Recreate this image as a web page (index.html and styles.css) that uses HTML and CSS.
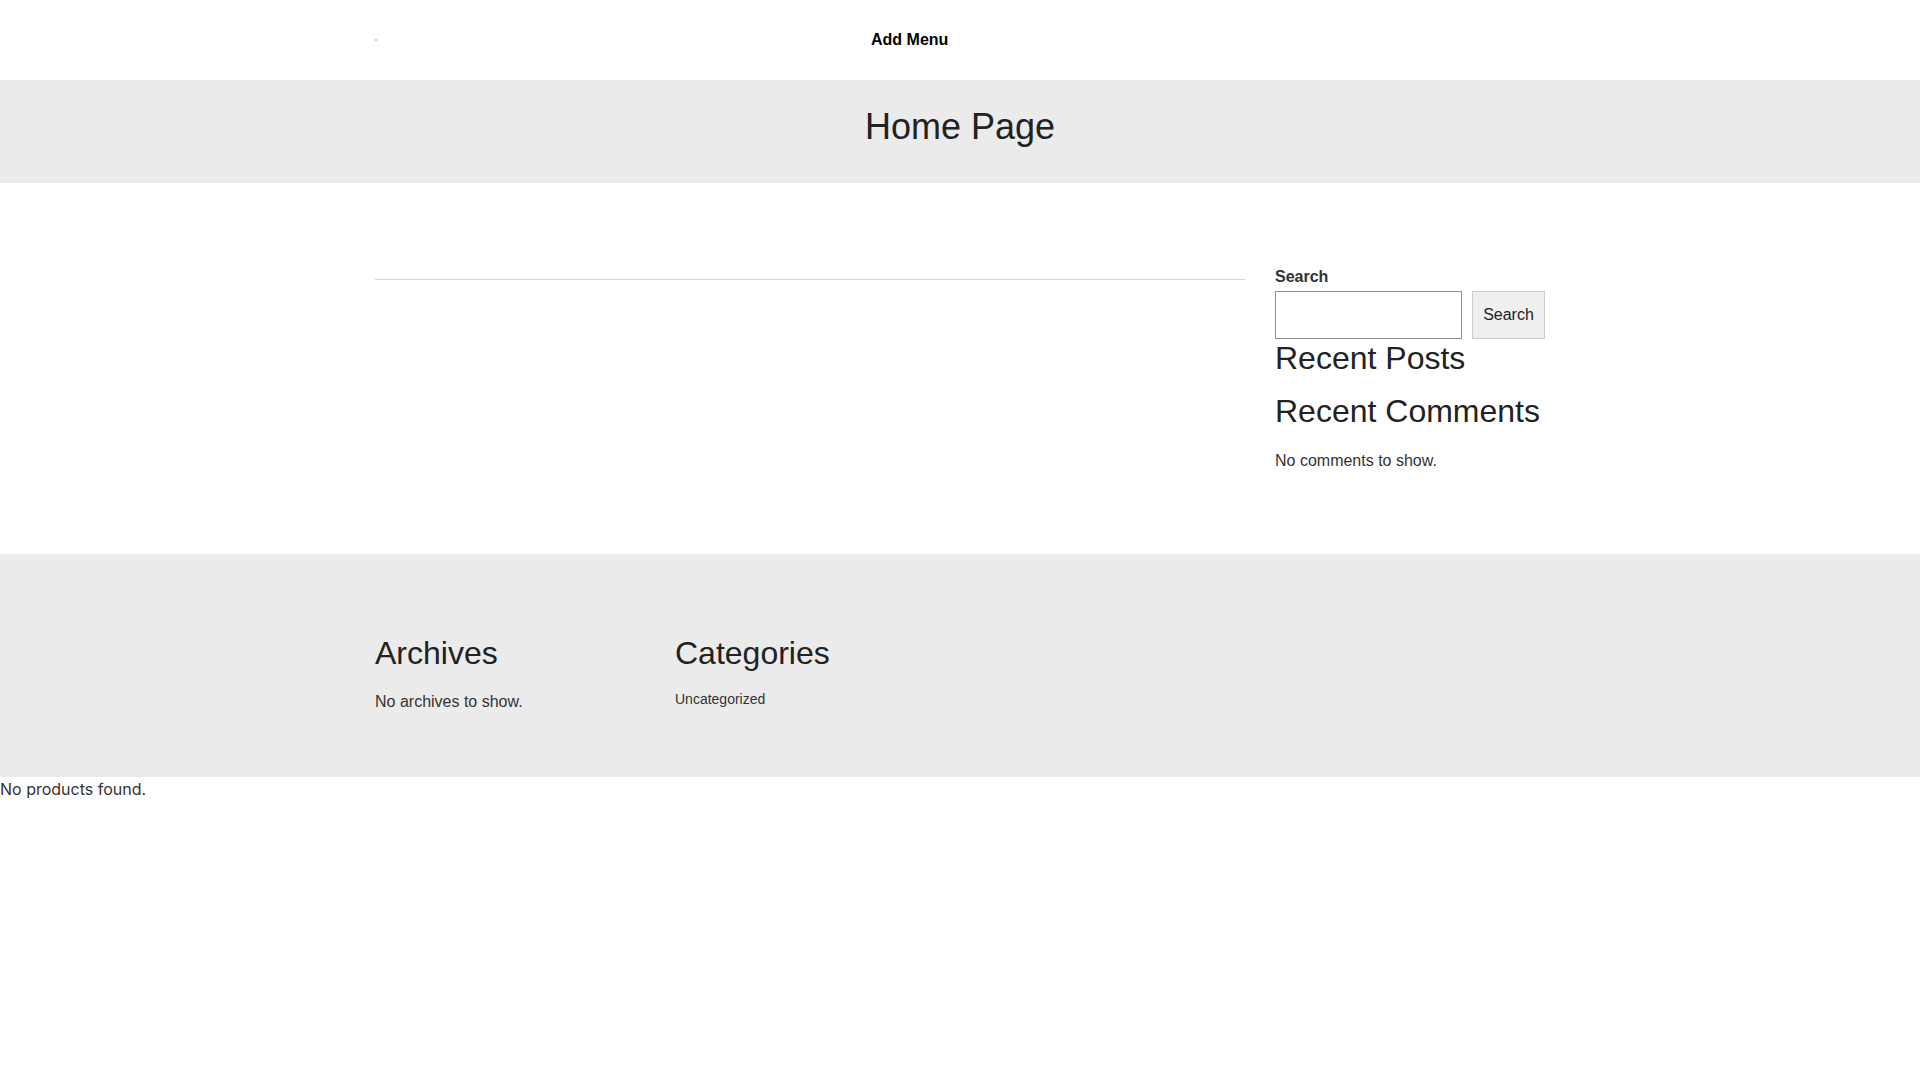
FILE: index.html
```html
<!DOCTYPE html>
<html lang="en">
<head>
  <meta charset="UTF-8" />
  <meta name="viewport" content="width=device-width, initial-scale=1.0" />
  <title>Home Page</title>
  <link rel="stylesheet" href="styles.css">
</head>
<body>
  <header class="site-header">
    <div class="container header-inner">
      <div class="logo"><span class="logo-dot"></span></div>
      <nav class="main-nav"><a href="#">Add Menu</a></nav>
    </div>
  </header>

  <div class="page-title">
    <h1>Home Page</h1>
  </div>

  <div class="container content">
    <main class="main-col">
      <div class="entry"></div>
    </main>
    <aside class="sidebar">
      <form class="search-form">
        <label class="search-label" for="s">Search</label>
        <div class="search-row">
          <input type="text" id="s" class="search-input">
          <button type="button" class="search-btn">Search</button>
        </div>
      </form>
      <h2 class="widget-title gap">Recent Posts</h2>
      <h2 class="widget-title">Recent Comments</h2>
      <p class="widget-text">No comments to show.</p>
    </aside>
  </div>

  <footer class="site-footer">
    <div class="container footer-inner">
      <div class="footer-col">
        <h2 class="widget-title">Archives</h2>
        <p class="widget-text">No archives to show.</p>
      </div>
      <div class="footer-col">
        <h2 class="widget-title">Categories</h2>
        <ul class="cat-list">
          <li><a href="#">Uncategorized</a></li>
        </ul>
      </div>
    </div>
  </footer>

  <p class="no-products">No products found.</p>
</body>
</html>
```

FILE: styles.css
```css
body {
  margin: 0;
  padding: 0;
  font-family: 'Liberation Sans', Arial, sans-serif;
  color: #333;
  background-color: #fff;
}

a {
  color: inherit;
  text-decoration: none;
}

.container {
  width: 1170px;
  margin: 0 auto;
}

.site-header {
  height: 80px;
  background-color: #fff;
}

.header-inner {
  height: 100%;
  display: flex;
  align-items: center;
}

.logo {
  width: 496px;
  display: flex;
  align-items: center;
}

.logo-dot {
  display: block;
  width: 2px;
  height: 2px;
  background-color: #ccc;
}

.main-nav a {
  font-size: 16px;
  font-weight: bold;
  color: #000;
}

.page-title {
  background-color: #ebebeb;
  height: 103px;
  box-sizing: border-box;
  padding-bottom: 10px;
  display: flex;
  align-items: center;
  justify-content: center;
}

.page-title h1 {
  margin: 0;
  font-size: 36px;
  font-weight: normal;
  color: #222;
  line-height: 1.1;
}

.content {
  display: flex;
  gap: 30px;
  padding: 85px 0 82px;
}

.main-col {
  width: 870px;
}

.entry {
  height: 11px;
  border-bottom: 1px solid #d4d4d4;
}

.sidebar {
  width: 270px;
}

.search-label {
  display: block;
  font-size: 16px;
  font-weight: bold;
  line-height: 18px;
  color: #333;
}

.search-row {
  display: flex;
  gap: 10px;
  margin-top: 5px;
}

.search-input {
  width: 187px;
  height: 48px;
  box-sizing: border-box;
  border: 1px solid #8f8f8f;
  margin: 0;
  padding: 0 8px;
  font-size: 16px;
}

.search-btn {
  width: 73px;
  height: 48px;
  box-sizing: border-box;
  background-color: #efefef;
  border: 1px solid #ccc;
  font-family: 'Liberation Sans', Arial, sans-serif;
  font-size: 16px;
  color: #222;
  padding: 0;
  cursor: pointer;
}

.widget-title {
  margin: 0;
  font-size: 32px;
  font-weight: normal;
  line-height: 35px;
  color: #222;
}

.widget-title.gap {
  margin-top: 2px;
  margin-bottom: 18px;
}

.widget-text {
  margin: 21px 0 0;
  font-size: 16px;
  line-height: 22px;
  color: #333;
}

.site-footer {
  background-color: #ebebeb;
  padding: 82px 0 64px;
}

.footer-inner {
  display: flex;
}

.footer-col {
  width: 300px;
}

.footer-col .widget-text {
  margin-top: 20px;
}

.cat-list {
  list-style: none;
  margin: 17px 0 0;
  padding: 0;
  font-size: 14px;
  line-height: 22px;
  color: #333;
}

.no-products {
  margin: 0;
  padding: 0;
  font-family: Inter, sans-serif;
  font-size: 16px;
  line-height: 24px;
  color: #333;
}
```
